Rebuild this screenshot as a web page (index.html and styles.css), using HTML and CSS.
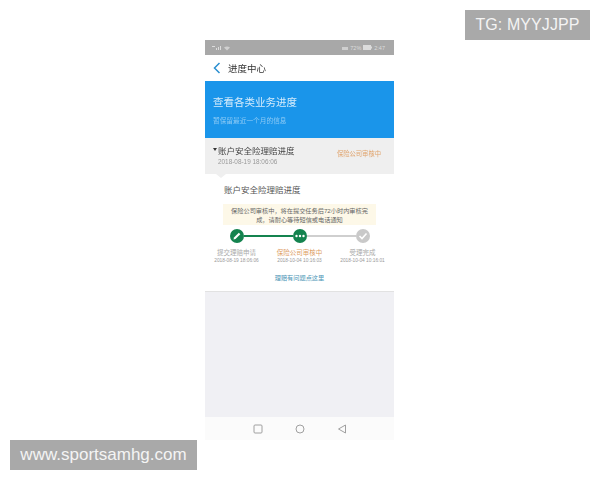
FILE: index.html
```html
<!DOCTYPE html>
<html lang="zh">
<head>
<meta charset="utf-8">
<title>进度中心</title>
<link rel="stylesheet" href="styles.css">
</head>
<body>
<div class="tag tag-top">TG: MYYJJPP</div>
<main class="phone">
  <div class="status">
    <svg width="20" height="6" viewBox="0 0 20 6"><path d="M0 1h3v1H0zM4 5h1V3H4zM6 5h1V2H6zM8 5h1V1H8z" fill="#dcdcdc"/><path d="M12 2.5q3-2 6 0L15 5.5Z" fill="#d0d0d0"/></svg>
    <div class="status-right">
      <svg width="6" height="5" viewBox="0 0 6 5"><path d="M0 2h6v3H0z" fill="#cfcfcf"/></svg>
      <span>72%</span>
      <svg width="9" height="5" viewBox="0 0 9 5"><rect width="8" height="5" fill="#dcdcdc"/><rect x="8" y="1.5" width="1" height="2" fill="#dcdcdc"/></svg>
      <span>2:47</span>
    </div>
  </div>
  <header class="nav">
    <svg class="back" width="8" height="12" viewBox="0 0 8 12"><path d="M6.5 1 1.5 6l5 5" fill="none" stroke="#2a8fd0" stroke-width="1.5"/></svg>
    <span>进度中心</span>
  </header>
  <section class="hero">
    <div class="hero-title">查看各类业务进度</div>
    <div class="hero-sub">暂保留最近一个月的信息</div>
  </section>
  <section class="head">
    <div class="head-left">
      <div class="head-title"><i class="caret"></i>账户安全险理赔进度</div>
      <div class="head-date">2018-08-19 18:06:06</div>
    </div>
    <div class="head-state">保险公司审核中</div>
  </section>
  <section class="detail">
    <i class="pointer"></i>
    <h2 class="detail-title">账户安全险理赔进度</h2>
    <p class="notice">保险公司审核中，将在提交任务后72小时内审核完成，请耐心等待短信或电话通知</p>
    <div class="track">
      <span class="dot green">
        <svg width="10" height="10" viewBox="0 0 10 10"><path d="M1.5 8.5 2 6.5 6.8 1.7 8.3 3.2 3.5 8Z" fill="#fff"/></svg>
      </span>
      <span class="line green-line"></span>
      <span class="dot green">
        <svg width="10" height="4" viewBox="0 0 10 4"><circle cx="1.5" cy="2" r="1.2" fill="#fff"/><circle cx="5" cy="2" r="1.2" fill="#fff"/><circle cx="8.5" cy="2" r="1.2" fill="#fff"/></svg>
      </span>
      <span class="line gray-line"></span>
      <span class="dot gray">
        <svg width="10" height="8" viewBox="0 0 10 8"><path d="M1.5 4 4 6.5 8.5 1.5" fill="none" stroke="#fff" stroke-width="1.6"/></svg>
      </span>
    </div>
    <div class="steps">
      <div class="step"><div class="step-name">提交理赔申请</div><div class="step-date">2018-08-19 18:06:06</div></div>
      <div class="step"><div class="step-name active">保险公司审核中</div><div class="step-date">2018-10-04 10:16:03</div></div>
      <div class="step"><div class="step-name">受理完成</div><div class="step-date">2018-10-04 10:16:01</div></div>
    </div>
    <div class="help">理赔有问题点这里</div>
  </section>
  <div class="blank"></div>
  <footer class="softkeys">
    <svg width="10" height="10" viewBox="0 0 10 10"><rect x="1" y="1" width="8" height="8" rx="1" fill="none" stroke="#a0a0a0"/></svg>
    <svg width="10" height="10" viewBox="0 0 10 10"><circle cx="5" cy="5" r="4" fill="none" stroke="#a0a0a0"/></svg>
    <svg width="10" height="10" viewBox="0 0 10 10"><path d="M8.5 1v8L1.5 5Z" fill="none" stroke="#a0a0a0"/></svg>
  </footer>
</main>
<div class="tag tag-bottom">www.sportsamhg.com</div>
</body>
</html>
```

FILE: styles.css
```css
* { box-sizing: border-box; }
html, body { margin: 0; height: 100%; }
body {
  background: #fff;
  font-family: "Liberation Sans", "Noto Sans CJK SC", sans-serif;
  overflow: hidden;
  position: relative;
  padding: 40px 0 0 205px;
}
.tag {
  position: absolute;
  background: #a9a9a9;
  color: #f4f4f4;
  display: flex;
  align-items: center;
  justify-content: center;
  height: 30px;
  font-size: 16px;
}
.tag-top { top: 10px; left: 465px; width: 125px; letter-spacing: 0.1px; }
.tag-bottom { top: 440px; left: 10px; width: 187px; font-size: 17px; }
.phone {
  width: 189px;
  height: 400px;
  display: flex;
  flex-direction: column;
  color: #333;
  filter: blur(0.35px);
}
.status {
  height: 15px;
  background: #a8a8a8;
  color: #dcdcdc;
  font-size: 5.5px;
  padding: 0 9px 0 7px;
  display: flex;
  align-items: center;
  justify-content: space-between;
}
.status-right { display: flex; align-items: center; gap: 2px; }
.nav {
  height: 26px;
  background: #fff;
  display: flex;
  align-items: center;
  gap: 7px;
  padding-left: 8px;
  font-size: 9.5px;
  color: #333;
}
.hero {
  height: 57px;
  background: #1a95ea;
  padding: 15px 8px 0;
  color: #d5ebfb;
}
.hero-title { font-size: 10.5px; line-height: 13px; }
.hero-sub { font-size: 6.7px; line-height: 8px; margin-top: 8px; color: #8ccaf5; }
.head {
  height: 36px;
  background: #efefef;
  display: flex;
  justify-content: space-between;
  padding: 7px 13px 0 8px;
}
.head-title { font-size: 8.5px; line-height: 12px; color: #444; display: flex; align-items: center; }
.caret {
  width: 0; height: 0;
  border: 2px solid transparent;
  border-top: 3px solid #333;
  border-bottom: 0;
  margin-right: 1px;
  margin-bottom: 3px;
}
.head-date { font-size: 6.4px; line-height: 8px; margin: 1px 0 0 5px; color: #999; }
.head-state { font-size: 6.3px; line-height: 9px; color: #e0a36c; margin-top: 4px; }
.detail {
  height: 118px;
  background: #fff;
  border-bottom: 1px solid #e2e2e2;
  position: relative;
  padding-top: 10px;
}
.pointer {
  position: absolute;
  top: 0; left: 11px;
  width: 0; height: 0;
  border: 5px solid transparent;
  border-top: 4px solid #efefef;
  border-bottom: 0;
}
.detail-title { margin: 0 0 0 19px; font-size: 8.5px; font-weight: 400; line-height: 12px; color: #555; }
.notice {
  margin: 8px 18px 0;
  height: 21px;
  background: #fdf8e8;
  color: #666;
  font-size: 6.2px;
  line-height: 9px;
  padding: 2px 4px;
  text-align: center;
}
.track {
  display: flex;
  align-items: center;
  margin: 4px 0 0 25px;
  width: 140px;
}
.dot {
  width: 14px; height: 14px;
  border-radius: 50%;
  flex: none;
  display: flex;
  align-items: center;
  justify-content: center;
}
.green { background: #14834f; }
.gray { background: #c9c9c9; }
.line { flex: 1; height: 1.5px; }
.green-line { background: #14834f; }
.gray-line { background: #cfcfcf; }
.steps {
  display: grid;
  grid-template-columns: repeat(3, 63px);
  margin-top: 5px;
  text-align: center;
}
.step-name { font-size: 6.5px; line-height: 9px; color: #aaa; }
.step-name.active { color: #dd9c5f; }
.step-date { font-size: 4.8px; line-height: 6px; color: #999; margin-top: 1px; white-space: nowrap; }
.help { margin-top: 9px; text-align: center; font-size: 6.2px; line-height: 9px; color: #4a94b5; }
.blank { flex: 1; background: #f0f0f4; }
.softkeys {
  height: 23px;
  background: #fbfbfb;
  display: flex;
  align-items: center;
  justify-content: center;
  gap: 32px;
}
```
